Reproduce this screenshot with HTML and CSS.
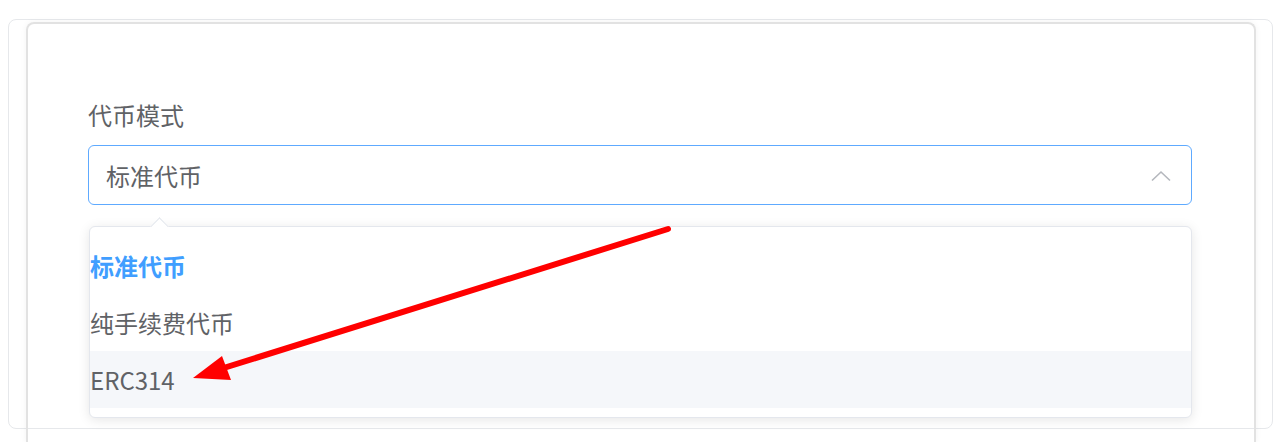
FILE: index.html
```html
<!DOCTYPE html>
<html lang="zh-CN">
<head>
    <meta charset="UTF-8">
    <meta name="viewport" content="width=device-width, initial-scale=1.0">
    <title>代币模式</title>
    <link rel="stylesheet" href="styles.css">
</head>
<body>

    <div class="frame">
        <div class="card">
            <div class="form-item">
                <div class="label">代币模式</div>

                <!-- Select -->
                <div class="select">
                    <span class="select-value">标准代币</span>
                    <svg class="caret" width="20" height="12" viewBox="0 0 20 12">
                        <path d="M1 10.5 L10 2 L19 10.5" fill="none" stroke="#b4b7bd" stroke-width="1.6"/>
                    </svg>
                </div>

                <!-- Dropdown -->
                <div class="dropdown">
                    <span class="dropdown-arrow"></span>
                    <ul class="options">
                        <li class="option selected">标准代币</li>
                        <li class="option">纯手续费代币</li>
                        <li class="option hover">ERC314</li>
                    </ul>
                </div>
            </div>
        </div>
    </div>

    <!-- annotation arrow -->
    <svg class="annotation" width="1275" height="442" viewBox="0 0 1275 442">
        <line x1="668" y1="229" x2="214" y2="371" stroke="#ff0000" stroke-width="6" stroke-linecap="round"/>
        <polygon points="193,378 222,356 231,380" fill="#ff0000"/>
    </svg>

</body>
</html>
```

FILE: styles.css
```css
html, body {
    margin: 0;
    height: 442px;
    overflow: hidden;
}
body {
    font-family: "Noto Sans CJK SC", "Noto Sans", sans-serif;
    background: #ffffff;
    color: #606266;
    padding: 19px 2px 0 8px;
    box-sizing: border-box;
}
.frame {
    height: 410px;
    border: 1px solid #e6e8eb;
    border-radius: 8px;
    box-sizing: border-box;
    padding: 2px 16px 0 17px;
}
.card {
    height: 421px;
    border: 2px solid #e2e2e2;
    border-bottom: none;
    border-radius: 8px 8px 0 0;
    box-shadow: 0 0 6px rgba(0, 0, 0, 0.05);
    padding: 75px 62px 0 60px;
    box-sizing: border-box;
}
.form-item {
    position: relative;
}
.label {
    font-size: 24px;
    line-height: 32px;
    color: #606266;
    margin-bottom: 14px;
}
.select {
    display: flex;
    align-items: center;
    justify-content: space-between;
    height: 60px;
    border: 1px solid #5eaaff;
    border-radius: 6px;
    padding: 0 20px 0 17px;
    box-sizing: border-box;
}
.select-value {
    font-size: 24px;
    color: #606266;
}
.caret {
    margin-top: 1px;
}
.dropdown {
    position: absolute;
    top: 127px;
    left: 1px;
    right: 0;
    background: #ffffff;
    border: 1px solid #e4e7ed;
    border-radius: 6px;
    box-shadow: 0 2px 12px rgba(0, 0, 0, 0.1);
}
.dropdown-arrow {
    position: absolute;
    top: -7px;
    left: 63px;
    width: 12px;
    height: 12px;
    background: #ffffff;
    border-left: 1px solid #e4e7ed;
    border-top: 1px solid #e4e7ed;
    transform: rotate(45deg);
}
.options {
    list-style: none;
    margin: 0;
    padding: 10px 0 9px;
}
.option {
    height: 57px;
    line-height: 57px;
    font-size: 24px;
    padding-left: 0;
    color: #606266;
}
.option.selected {
    color: #409eff;
    font-weight: bold;
}
.option.hover {
    background: #f5f7fa;
}
.annotation {
    position: absolute;
    top: 0;
    left: 0;
    pointer-events: none;
}
```
